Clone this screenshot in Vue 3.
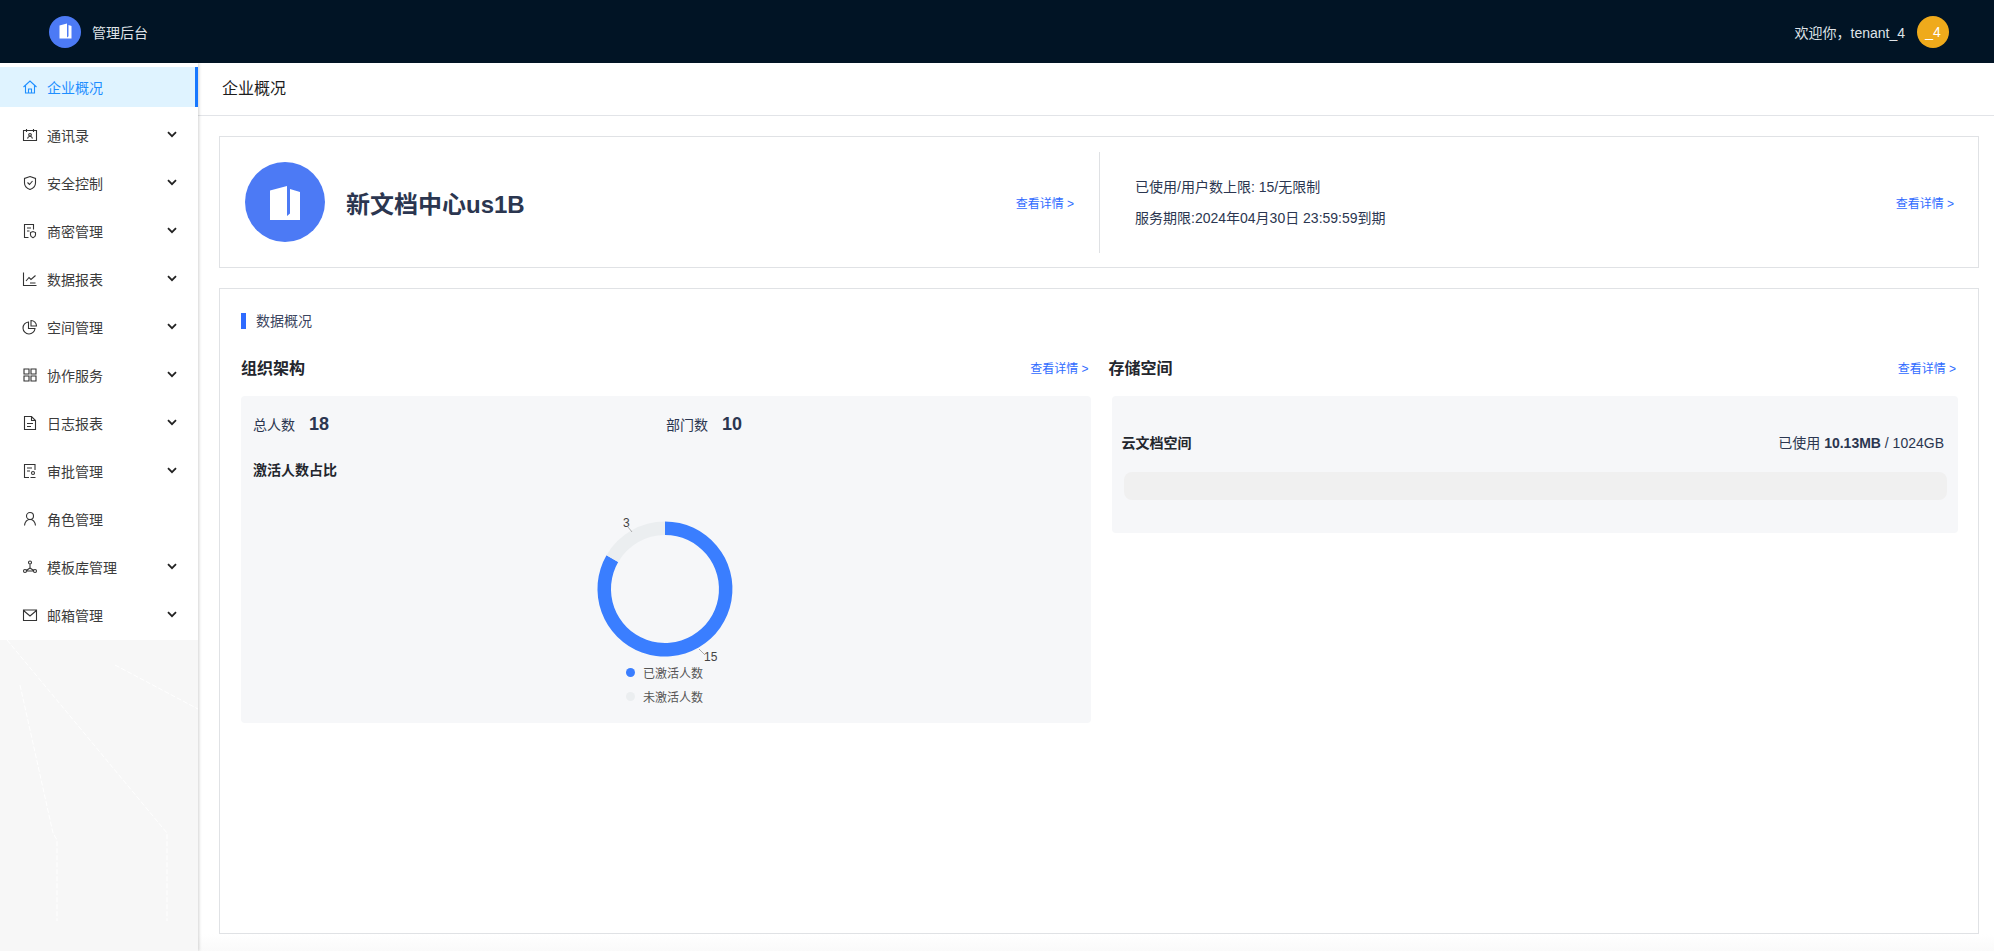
<script setup>
const menus = [
  { label: "企业概况", icon: "home", active: true },
  { label: "通讯录", icon: "contacts", arrow: true },
  { label: "安全控制", icon: "shield", arrow: true },
  { label: "商密管理", icon: "secret", arrow: true },
  { label: "数据报表", icon: "chart", arrow: true },
  { label: "空间管理", icon: "pie", arrow: true },
  { label: "协作服务", icon: "grid", arrow: true },
  { label: "日志报表", icon: "log", arrow: true },
  { label: "审批管理", icon: "approve", arrow: true },
  { label: "角色管理", icon: "user" },
  { label: "模板库管理", icon: "nodes", arrow: true },
  { label: "邮箱管理", icon: "mail", arrow: true },
];

const iconPaths = {
  home: "M1.5 8 8 2l6.500 6M3.500 6.500V14h9V6.500M6.500 14V10h3v4",
  contacts: "M1.500 3.500h13v10h-13zM4.500 2v3M11.500 2v3M8 6.500a1.300 1.300 0 1 1 0 2.600 1.300 1.300 0 0 1 0-2.600zM5.500 11.500c.4-1.500 1.300-2.200 2.500-2.200s2.100.7 2.500 2.200",
  shield: "M8 1.500 13.500 3.500v4.500c0 3.200-2.300 5.300-5.500 6.500-3.200-1.200-5.500-3.300-5.500-6.500V3.500zM5.500 7.500 7.500 9.500 10.500 6",
  secret: "M11.500 6.500V1.500h-9v13h4M5 5h4M5 8h2.500M8.500 9.500l2.500-1 2.500 1v2.500c0 1.200-1 2-2.500 2.700-1.500-.7-2.500-1.500-2.500-2.700z",
  chart: "M1.500 1.500v13h13M4 10l3-3.500 2 2 4.500-4M8 12h5.500",
  pie: "M6.500 3a6 6 0 1 0 6.500 6.500H6.500zM9 1.500A5.500 5.500 0 0 1 14.500 7H9z",
  grid: "M2 2h5v5H2zM9 2h5v5H9zM2 9h5v5H2zM9 9h5v5H9z",
  log: "M2.500 1.500h7l4 4v9h-11zM9.500 1.500v4h4M5 8.500h6M5 11.500h4",
  approve: "M13 7V1.500H2.500v13H7M5 5h5M5 8h3M11 8.500a1.500 1.500 0 1 1 0 3 1.500 1.500 0 0 1 0-3zM8.500 14.500h5",
  user: "M8 1.500a3.500 3.500 0 1 1 0 7 3.500 3.500 0 0 1 0-7zM2.500 14.500c.5-3.500 2.700-6 5.500-6s5 2.500 5.500 6",
  nodes: "M8 2a1.500 1.500 0 1 1 0 3 1.500 1.500 0 0 1 0-3zM3 10.500a1.500 1.500 0 1 1 0 3 1.500 1.500 0 0 1 0-3zM13 10.500a1.500 1.500 0 1 1 0 3 1.500 1.500 0 0 1 0-3zM8 5v4M8 9l-3.700 2.500M8 9l3.700 2.500M4.500 12h7",
  mail: "M1.500 3h13v10.500h-13zM1.500 3.500 8 9l6.500-5.500",
};

// donut slices, center 100,100 in the chart box
const donut = {
  blue: "M100 32.5A67.5 67.5 0 1 1 41.5 66.250L53.200 73A54 54 0 1 0 100 46Z",
  grey: "M100 32.500A67.500 67.500 0 0 0 41.500 66.250L53.200 73A54 54 0 0 1 100 46Z",
};
</script>

<template>
  <div class="page">
    <header class="top">
      <div class="brand">
        <span class="logo">
          <svg viewBox="0 0 32 32" width="32" height="32"><path d="M10.500 9.500 18 7.500v14l1.500-1.200V9l3 1v12.500h-12z" fill="#fff" /></svg>
        </span>
        <span class="brand-name">管理后台</span>
      </div>
      <div class="who">
        <span>欢迎你，tenant_4</span>
        <span class="avatar">_4</span>
      </div>
    </header>

    <div class="body">
      <aside class="side">
        <nav class="menu">
          <div v-for="m in menus" :key="m.label" :class="['item', { active: m.active }]">
            <svg class="ico" viewBox="0 0 16 16" width="16" height="16"><path :d="iconPaths[m.icon]" /></svg>
            <span class="item-label">{{ m.label }}</span>
            <svg v-if="m.arrow" class="arrow" viewBox="0 0 10 7" width="10" height="7"><path d="M1 1.200 5 5.200l4-4" /></svg>
          </div>
        </nav>
        <svg class="side-bg" viewBox="0 0 198 311" preserveAspectRatio="none">
          <path d="M7 0 167 193V281M115 25 198 69M20 45 53 193 57 200V281" />
        </svg>
      </aside>

      <main class="main">
        <div class="crumb">企业概况</div>
        <div class="content">
          <section class="card top-card">
            <div class="org">
              <span class="org-logo">
                <svg viewBox="0 0 80 80" width="80" height="80"><path d="M25 28.500 42 24v30l3-2.500V27l10 3v28H25z" fill="#fff" /></svg>
              </span>
              <span class="org-name">新文档中心us1B</span>
              <a class="link org-link">查看详情 &gt;</a>
            </div>
            <div class="usage">
              <div class="usage-text">
                <p>已使用/用户数上限: 15/无限制</p>
                <p>服务期限:2024年04月30日 23:59:59到期</p>
              </div>
              <a class="link">查看详情 &gt;</a>
            </div>
          </section>

          <section class="card data-card">
            <h3 class="data-title">数据概况</h3>
            <div class="cols">
              <div class="col">
                <div class="col-head">
                  <span class="col-title">组织架构</span>
                  <a class="link">查看详情 &gt;</a>
                </div>
                <div class="panel org-panel">
                  <div class="stats">
                    <div class="stat"><span>总人数</span><b>18</b></div>
                    <div class="stat"><span>部门数</span><b>10</b></div>
                  </div>
                  <div class="ratio-title">激活人数占比</div>
                  <svg class="donut" viewBox="0 0 200 200" width="200" height="200">
                    <path :d="donut.blue" fill="#3a7eff" />
                    <path :d="donut.grey" fill="#ebeef0" />
                    <path class="lead" d="M63 38l4 5M134 160l6 6" />
                    <text x="58" y="38" class="num">3</text>
                    <text x="139" y="172" class="num">15</text>
                  </svg>
                  <div class="legend">
                    <div class="legend-row"><i class="dot blue"></i>已激活人数</div>
                    <div class="legend-row"><i class="dot grey"></i>未激活人数</div>
                  </div>
                </div>
              </div>

              <div class="col">
                <div class="col-head">
                  <span class="col-title">存储空间</span>
                  <a class="link">查看详情 &gt;</a>
                </div>
                <div class="panel store-panel">
                  <div class="store-row">
                    <span class="store-name">云文档空间</span>
                    <span class="store-used">已使用 <b>10.13MB</b> / 1024GB</span>
                  </div>
                  <div class="bar"></div>
                </div>
              </div>
            </div>
          </section>
        </div>
      </main>
    </div>
    <div class="bottom-fade"></div>
  </div>
</template>

<style scoped>
.page {
  position: relative;
  height: 951px;
  overflow: hidden;
  background: #fff;
  font-family: "Liberation Sans", "Noto Sans CJK SC", sans-serif;
  font-size: 14px;
  color: #2b3650;
}
.top {
  height: 63px;
  background: #011425;
  display: flex;
  align-items: center;
  justify-content: space-between;
  padding: 0 45px 0 49px;
  color: #dfe3e8;
}
.brand,
.who {
  display: flex;
  align-items: center;
}
.logo {
  width: 32px;
  height: 32px;
  border-radius: 50%;
  background: #4c7af5;
  display: block;
}
.logo svg {
  display: block;
}
.brand-name {
  margin-left: 11px;
}
.avatar {
  width: 32px;
  height: 32px;
  margin-left: 12px;
  border-radius: 50%;
  background: #efaa1b;
  color: #fff;
  display: flex;
  align-items: center;
  justify-content: center;
}
.body {
  display: flex;
  height: 888px;
}
.side {
  position: relative;
  width: 198px;
  flex: none;
  background: #f7f7f7;
  box-shadow: 1px 0 3px rgba(0, 0, 0, 0.18);
  z-index: 1;
}
.menu {
  position: relative;
  z-index: 1;
  background: #fff;
  padding-top: 4px;
  height: 577px;
  box-sizing: border-box;
}
.item {
  height: 40px;
  margin-bottom: 8px;
  display: flex;
  align-items: center;
  padding: 0 21px 0 22px;
  color: #3c3c3c;
}
.item.active {
  background: #dff3ff;
  color: #1f8fff;
  box-shadow: inset -3px 0 0 #1677ff;
}
.ico {
  fill: none;
  stroke: currentColor;
  stroke-width: 1.100;
  flex: none;
}
.item:not(.active) .ico {
  stroke: #333;
}
.item-label {
  margin-left: 9px;
  flex: 1;
}
.arrow {
  fill: none;
  stroke: #222;
  stroke-width: 1.800;
  margin-top: -2px;
}
.side-bg {
  position: absolute;
  left: 0;
  top: 577px;
  width: 198px;
  height: 311px;
}
.side-bg path {
  fill: none;
  stroke: #fff;
  stroke-width: 1;
  stroke-dasharray: 5 2;
}
.main {
  flex: 1;
  min-width: 0;
  display: flex;
  flex-direction: column;
}
.crumb {
  height: 53px;
  box-sizing: border-box;
  border-bottom: 1px solid #e2e4e8;
  padding-left: 24px;
  font-size: 16px;
  line-height: 52px;
  color: #1d1d1d;
}
.content {
  flex: 1;
  padding: 20px 15px 17px 21px;
  display: flex;
  flex-direction: column;
  gap: 20px;
  min-height: 0;
}
.card {
  border: 1px solid #e0e2e5;
  box-sizing: border-box;
}
.top-card {
  height: 132px;
  flex: none;
  display: flex;
  align-items: center;
}
.org {
  width: 880px;
  height: 101px;
  box-sizing: border-box;
  flex: none;
  display: flex;
  align-items: center;
  padding: 0 25px 0 25px;
  border-right: 1px solid #dfe1e4;
}
.org-logo {
  width: 80px;
  height: 80px;
  border-radius: 50%;
  background: #4c7af5;
  flex: none;
}
.org-logo svg {
  display: block;
}
.org-name {
  margin-left: 21px;
  flex: 1;
  font-size: 24px;
  font-weight: 700;
  color: #2b3650;
}
.link {
  font-size: 12px;
  color: #2f6bff;
  white-space: nowrap;
}
.usage {
  flex: 1;
  display: flex;
  align-items: center;
  justify-content: space-between;
  padding: 0 24px 0 35px;
}
.usage-text p {
  margin: 0;
  line-height: 22px;
}
.usage-text p + p {
  margin-top: 9px;
}
.data-card {
  flex: 1;
  padding: 24px 20px 0 21px;
}
.data-title {
  margin: 0;
  height: 16px;
  border-left: 5px solid #2f6bff;
  padding-left: 10px;
  font-size: 14px;
  font-weight: 400;
  line-height: 16px;
  color: #3b4560;
}
.cols {
  display: flex;
  gap: 18px;
  margin-top: 27px;
}
.col {
  flex: 1;
  min-width: 0;
}
.col-head {
  height: 22px;
  display: flex;
  align-items: center;
  justify-content: space-between;
  padding-right: 2px;
}
.col-title {
  font-size: 16px;
  font-weight: 700;
  color: #23262d;
}
.panel {
  margin-top: 18px;
  background: #f6f7f9;
  border-radius: 4px;
  box-sizing: border-box;
}
.org-panel {
  position: relative;
  height: 327px;
  padding: 0 12px;
}
.stats {
  display: flex;
  padding-top: 18px;
}
.stat {
  flex: none;
  width: 413px;
  display: flex;
  align-items: center;
  height: 20px;
}
.stat b {
  margin-left: 14px;
  font-size: 18px;
  color: #2b3650;
}
.ratio-title {
  margin-top: 25px;
  font-weight: 700;
  color: #23262d;
}
.donut {
  position: absolute;
  left: 324px;
  top: 93px;
}
.donut .num {
  font-size: 12px;
  fill: #444;
}
.donut .lead {
  fill: none;
  stroke: #999;
  stroke-width: 0.800;
}
.legend {
  position: absolute;
  left: 385px;
  top: 264px;
  font-size: 12px;
  color: #555;
}
.legend-row {
  height: 24px;
  display: flex;
  align-items: center;
  gap: 8px;
}
.dot {
  width: 9px;
  height: 9px;
  border-radius: 50%;
}
.dot.blue {
  background: #3a7eff;
}
.dot.grey {
  background: #ebeef0;
}
.store-panel {
  height: 137px;
  margin-left: 3px;
  margin-right: 0;
  padding: 36px 11px 0 10px;
}
.store-row {
  display: flex;
  justify-content: space-between;
  align-items: center;
  height: 20px;
  padding-right: 3px;
}
.store-name {
  font-weight: 700;
  color: #23262d;
}
.bar {
  height: 28px;
  margin: 20px 0 0 2px;
  border-radius: 8px;
  background: #f0f0f0;
}
.bottom-fade {
  position: absolute;
  left: 0;
  right: 0;
  bottom: 0;
  height: 17px;
  background: linear-gradient(#fff, #fafafa);
  z-index: 0;
  pointer-events: none;
}
</style>
